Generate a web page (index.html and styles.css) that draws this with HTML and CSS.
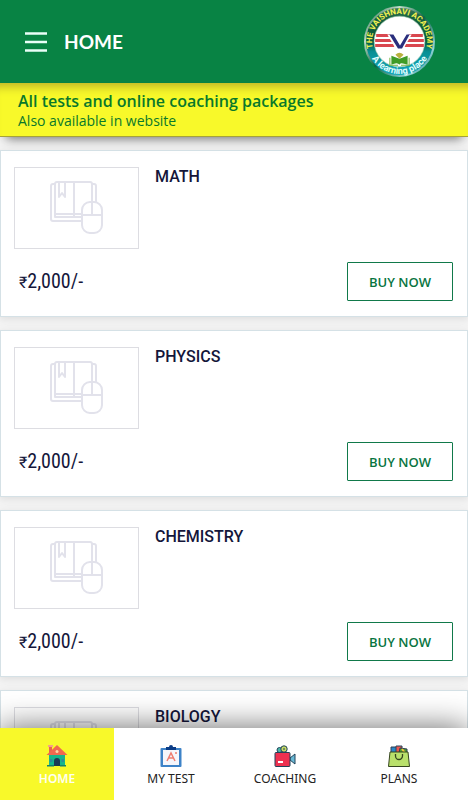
FILE: index.html
```html
<!DOCTYPE html>
<html lang="en">
<head>
<meta charset="utf-8">
<meta name="viewport" content="width=device-width, initial-scale=1">
<title>Home</title>
<link rel="stylesheet" href="styles.css">
</head>
<body>
<svg class="defs" aria-hidden="true">
  <symbol id="book" viewBox="0 0 54 54">
    <g fill="none" stroke="currentColor" stroke-width="2" stroke-linejoin="round">
      <path d="M5 3H3a2 2 0 0 0-2 2v33a2 2 0 0 0 2 2h29M42 3h2a2 2 0 0 1 2 2v16"/>
      <path d="M32 36H5V3a2 2 0 0 1 2-2h33a2 2 0 0 1 2 2v18M5 33h27M24 1v35M9 1v15l3-4 3 4V1"/>
      <rect x="32" y="21" width="20" height="31" rx="8"/>
      <path d="M32 34h20M42 21v13"/>
    </g>
  </symbol>
</svg>

<header class="topbar">
  <button class="menu" type="button" aria-label="Menu"><svg width="22" height="20" viewBox="0 0 22 20"><path d="M0 1.500h22M0 10h22M0 18.500h22" stroke="#e9fff8" stroke-width="2.500"/></svg></button>
  <h1>HOME</h1>
  <svg class="logo" viewBox="0 0 70 70" role="img" aria-label="The Vaishnavi Academy, A learning place">
    <defs>
      <linearGradient id="ring" x1="0" y1="0" x2="0" y2="1">
        <stop offset="0" stop-color="#3d7d5c"/><stop offset=".15" stop-color="#17613f"/>
        <stop offset=".5" stop-color="#075b3c"/><stop offset=".65" stop-color="#078f94"/><stop offset="1" stop-color="#16a9bd"/>
      </linearGradient>
      <linearGradient id="rim" x1="0" y1="0" x2="1" y2="1">
        <stop offset="0" stop-color="#04552f"/><stop offset=".25" stop-color="#c3dccb"/><stop offset=".5" stop-color="#0a6446"/><stop offset=".8" stop-color="#8ed4d6"/><stop offset="1" stop-color="#05636b"/>
      </linearGradient>
      <path id="arcTop" d="M9.600 44A27 27 0 1 1 60.400 44"/>
      <path id="arcBottom" d="M4.600 45A32 32 0 0 0 65.400 45"/>
    </defs>
    <circle cx="35" cy="35" r="34" fill="url(#ring)" stroke="url(#rim)" stroke-width="2"/>
    <circle cx="35" cy="35" r="25" fill="#fff" stroke="#9fc8ae" stroke-width=".6"/>
    <path d="M12 29h14M11 34h17M11 39h19M44 29h14M42 34h17M40 39h19" stroke="#d9474f" stroke-width="3"/>
    <path d="M23 28h24l-8 14h-8z" fill="#fff"/>
    <path d="M25 28h4l6.500 11L42 28h3l-7.500 14h-4z" fill="#2a2f7d"/>
    <path d="M27 49l8 3 8-3v9q-8-3-8 0-2-3-8 0z" fill="#3f9b27"/>
    <path d="M31 48q4-4 8 0l-4 4z" fill="#b9b13d"/>
    <path d="M25.500 51v7.500h8M44.500 51v7.500h-8" fill="none" stroke="#74b544"/>
    <text class="logo-top"><textPath href="#arcTop" startOffset="50%" text-anchor="middle">THE VAISHNAVI ACADEMY</textPath></text>
    <text class="logo-bottom"><textPath href="#arcBottom" startOffset="50%" text-anchor="middle">A learning place</textPath></text>
  </svg>
</header>

<section class="banner">
  <h2>All tests and online coaching packages</h2>
  <p>Also available in website</p>
</section>

<main class="packages">
  <article class="card">
    <div class="thumb"><svg><use href="#book"/></svg></div>
    <h3>MATH</h3>
    <p class="price"><span>₹</span>2,000/-</p>
    <button class="buy" type="button">BUY NOW</button>
  </article>
  <article class="card">
    <div class="thumb"><svg><use href="#book"/></svg></div>
    <h3>PHYSICS</h3>
    <p class="price"><span>₹</span>2,000/-</p>
    <button class="buy" type="button">BUY NOW</button>
  </article>
  <article class="card">
    <div class="thumb"><svg><use href="#book"/></svg></div>
    <h3>CHEMISTRY</h3>
    <p class="price"><span>₹</span>2,000/-</p>
    <button class="buy" type="button">BUY NOW</button>
  </article>
  <article class="card">
    <div class="thumb"><svg><use href="#book"/></svg></div>
    <h3>BIOLOGY</h3>
  </article>
</main>

<nav class="tabs">
  <a class="tab active" href="#home">
    <svg viewBox="0 0 22 22"><path d="M3 10h16v11H3z" fill="#16b58c"/><path d="M3 1h3v7H3z" fill="#e8644c"/><path d="M2 0h5v2H2z" fill="#f4a08a"/><path d="M11 0l10.500 10H.5z" fill="#f0694f"/><circle cx="11" cy="6.500" r="1.500" fill="#fbd5a5"/><path d="M8 21v-5a3 3 0 0 1 6 0v5z" fill="#1c3a55"/><path d="M4 14h2.500v3H4zM15.500 14H18v3h-2.500z" fill="#2c8c9a"/><path d="M1 20h7v1.500H1zM14 20h6v1.500h-6z" fill="#12836c"/></svg>
    <span>HOME</span>
  </a>
  <a class="tab" href="#my-test">
    <svg viewBox="0 0 22 22"><rect x=".5" y="3" width="21" height="19" rx="1" fill="#3e83c8"/><path d="M3 5h16v15H3z" fill="#f6f6fb"/><path d="M6 5V2h3a2 2 0 0 1 4 0h3v3z" fill="#0b3c86"/><path d="M7 16l4-8 4 8M9 13h5M15 8h2" fill="none" stroke="#ef7d70" stroke-width="1.500"/></svg>
    <span>MY TEST</span>
  </a>
  <a class="tab" href="#coaching">
    <svg viewBox="0 0 22 22"><g stroke="#21435a"><circle cx="5.500" cy="5" r="2.500" fill="#4ab6a9"/><circle cx="10" cy="4" r="3.200" fill="#c6da64"/><path d="M16 13l5-4v10l-5-4z" fill="#69b9d5"/><rect x="1" y="7.500" width="15" height="14" rx="1" fill="#ee3150"/></g><path d="M4 17h5" stroke="#fff" stroke-width="2"/><path d="M10 5V3" stroke="#21435a"/></svg>
    <span>COACHING</span>
  </a>
  <a class="tab" href="#plans">
    <svg viewBox="0 0 22 22"><path d="M3 2h6l2 6H3z" fill="#2885c7" stroke="#333e53"/><path d="M8 1h6v7H8z" fill="#e95650" stroke="#27465e"/><path d="M12 3l7 1v4h-8z" fill="#4d9a36" stroke="#333e53"/><path d="M14 4l3 4" stroke="#f3c63f" stroke-width="2"/><path d="M2 7h18l1.500 14.500H.5z" fill="#b9e06b" stroke="#35451f"/><path d="M7.500 9v2a3.500 3.500 0 0 0 7 0V9" fill="none" stroke="#35451f" stroke-width="1.300"/></svg>
    <span>PLANS</span>
  </a>
</nav>
</body>
</html>
```
FILE: styles.css
```css
* {
  box-sizing: border-box;
}

body {
  margin: 0;
  height: 100vh;
  display: flex;
  flex-direction: column;
  overflow: hidden;
  background: #f4f4f4;
  color: #14163a;
  font-family: "Open Sans", sans-serif;
}

h1, h2, h3, p {
  margin: 0;
}

.defs {
  display: none;
}

.topbar {
  flex: none;
  display: flex;
  align-items: center;
  gap: 17px;
  padding: 6px 33px 6px 25px;
  background: #088344;
  color: #fff;
}

.topbar h1 {
  font: 700 19px/24px Lato, sans-serif;
}

.menu {
  display: flex;
  padding: 0;
  border: 0;
  background: none;
}

.logo {
  width: 71px;
  height: 71px;
  margin-left: auto;
}

.logo-top {
  fill: #f2ef50;
  font: 700 8px Roboto, sans-serif;
}

.logo-bottom {
  fill: #e4ffff;
  font: 700 9px Roboto, sans-serif;
}

.banner {
  flex: none;
  position: relative;
  z-index: 1;
  padding: 8px 18px 5px;
  border-bottom: 1px solid #a5a23a;
  background: #f8f92a;
  color: #08782b;
  box-shadow: inset 0 12px 10px -8px #bdb527, 0 8px 10px -6px #777;
}

.banner h2 {
  font-size: 16px;
  line-height: 20px;
  font-weight: 600;
}

.banner p {
  font-size: 14px;
  line-height: 20px;
}

.packages {
  flex: 1;
  min-height: 0;
  display: flex;
  flex-direction: column;
  gap: 13px;
  padding-top: 13px;
  overflow: hidden;
}

.card {
  flex: none;
  display: grid;
  grid-template-columns: 125px 1fr auto;
  grid-template-rows: 82px 39px;
  column-gap: 16px;
  row-gap: 13px;
  padding: 16px 14px 15px 13px;
  border: 1px solid #d5e1e6;
  background: #fff;
  box-shadow: 0 2px 8px #ddd;
}

.thumb {
  display: flex;
  align-items: center;
  justify-content: center;
  border: 1px solid #dddde2;
  color: #e2e2eb;
}

.thumb svg {
  width: 54px;
  height: 54px;
}

.card h3 {
  grid-column: 2 / 4;
  font: 500 16px/20px Roboto, sans-serif;
}

.price {
  grid-column: 1 / 3;
  padding-left: 5px;
  font: 20px/38px "Liberation Sans Narrow", "Roboto Condensed", Roboto, sans-serif;
}

.price span {
  font-family: Roboto, sans-serif;
  font-size: 16px;
}

.buy {
  width: 106px;
  border: 1px solid #11794a;
  border-radius: 1px;
  background: #fff;
  color: #087541;
  font: 600 13px/16px "Open Sans", sans-serif;
}

.tabs {
  flex: none;
  position: relative;
  z-index: 2;
  display: grid;
  grid-template-columns: repeat(4, 1fr);
  padding-right: 12px;
  background: #fff;
  box-shadow: 0 0 32px rgba(0, 0, 0, .6);
}

.tab {
  display: flex;
  flex-direction: column;
  align-items: center;
  gap: 4px;
  padding: 17px 0 13px;
  color: #222;
  font: 12px/16px "Noto Sans", sans-serif;
  text-decoration: none;
}

.tab svg {
  width: 22px;
  height: 22px;
}

.tab.active {
  background: #f8f92a;
  color: #fffff0;
  font-weight: 600;
}
```
